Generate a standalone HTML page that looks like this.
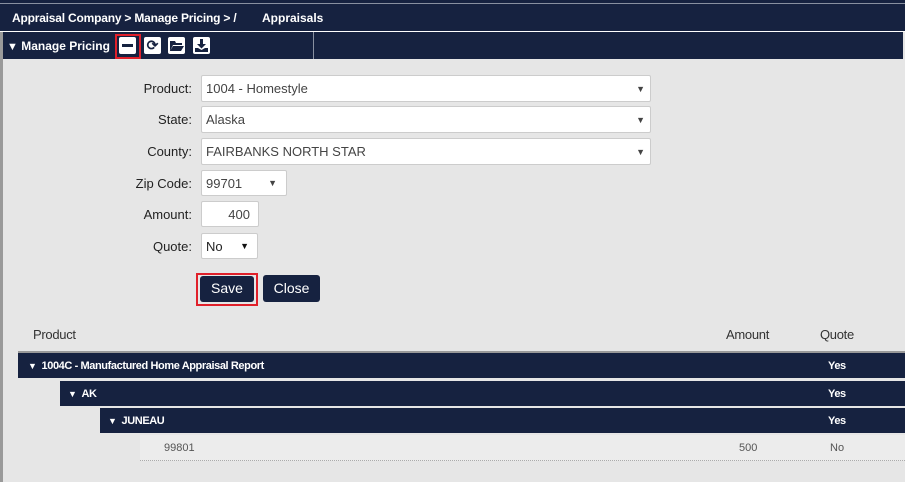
<!DOCTYPE html>
<html><head><style>
*{margin:0;padding:0;box-sizing:border-box}
body{width:905px;height:482px;background:#e6e6e6;font-family:"Liberation Sans",sans-serif;position:relative;overflow:hidden}
.a{position:absolute}
.dk{background:#162240}
.t{color:#fff;font-weight:bold;font-size:12px}
.lbl{position:absolute;right:713px;font-size:13px;color:#222;text-align:right}
.sel{position:absolute;background:#fff;border:1px solid #ccc;border-radius:2px;font-size:13px;color:#444;padding-left:4px;display:flex;align-items:center}
.sel .ar{position:absolute;right:5px;font-size:9px;color:#444}
.row{position:absolute;height:25px;background:#162240;color:#fff;font-weight:bold;font-size:11px;display:flex;align-items:center;letter-spacing:-0.4px}
.ic{position:absolute;top:37px;width:17px;height:17px;background:#fff;border-radius:2px}
</style></head><body>
<div class="a" style="left:0;top:0;width:3px;height:482px;background:#9a9a9a"></div>
<div class="a dk" style="left:0;top:0;width:905px;height:31px"></div>
<div class="a" style="left:0;top:3px;width:905px;height:1px;background:#8890a0"></div>
<div class="a" style="left:0;top:31px;width:905px;height:1px;background:#fff"></div>
<div class="a dk" style="left:3px;top:32px;width:900px;height:27px"></div>
<div class="a" style="left:313px;top:32px;width:1px;height:27px;background:#8890a0"></div>
<div class="a t" style="left:12px;top:11px;letter-spacing:-0.2px">Appraisal Company &gt; Manage Pricing &gt; /</div>
<div class="a t" style="left:262px;top:11px">Appraisals</div>
<div class="a t" style="left:7px;top:39px"><span style="font-size:11px">▼</span> Manage Pricing</div>
<div class="a" style="left:115px;top:34px;width:26px;height:25px;border:2px solid #e0202a"></div>
<div class="ic" style="left:119px"><div class="a" style="left:3px;top:7px;width:11px;height:3px;background:#162240"></div></div>
<div class="ic" style="left:144px;color:#162240;font-size:14px;font-weight:bold;text-align:center;line-height:17px">⟳</div>
<div class="ic" style="left:168px"><svg width="17" height="17"><path d="M2 4h5l1 2h6v2H5l-3 6z M5 9h11l-3 5H2z" fill="#162240"/></svg></div>
<div class="ic" style="left:193px"><svg width="17" height="17"><path d="M7 2h3v5h3l-4.5 4.5L4 7h3z M2 11h3l3.5 2 3.5-2h3v4H2z" fill="#162240"/></svg></div>

<div class="lbl" style="top:81px">Product:</div>
<div class="sel" style="left:201px;top:75px;width:450px;height:27px">1004 - Homestyle<span class="ar">▼</span></div>
<div class="lbl" style="top:112px">State:</div>
<div class="sel" style="left:201px;top:106px;width:450px;height:27px">Alaska<span class="ar">▼</span></div>
<div class="lbl" style="top:144px">County:</div>
<div class="sel" style="left:201px;top:138px;width:450px;height:27px">FAIRBANKS NORTH STAR<span class="ar">▼</span></div>
<div class="lbl" style="top:176px">Zip Code:</div>
<div class="sel" style="left:201px;top:170px;width:86px;height:26px">99701<span class="ar" style="right:9px">▼</span></div>
<div class="lbl" style="top:207px">Amount:</div>
<div class="sel" style="left:201px;top:201px;width:58px;height:26px;justify-content:flex-end;padding-right:8px">400</div>
<div class="lbl" style="top:239px">Quote:</div>
<div class="sel" style="left:201px;top:233px;width:57px;height:26px;color:#222">No<span class="ar" style="right:8px;color:#111">▼</span></div>

<div class="a" style="left:196px;top:273px;width:62px;height:33px;border:2px solid #e0202a"></div>
<div class="a dk" style="left:200px;top:276px;width:54px;height:26px;border-radius:3px;color:#fff;font-size:14px;text-align:center;line-height:25px">Save</div>
<div class="a dk" style="left:263px;top:275px;width:57px;height:27px;border-radius:3px;color:#fff;font-size:14px;text-align:center;line-height:26px">Close</div>

<div class="a" style="left:33px;top:327px;font-size:13px;color:#333;letter-spacing:-0.3px">Product</div>
<div class="a" style="left:726px;top:327px;font-size:13px;color:#333;letter-spacing:-0.3px">Amount</div>
<div class="a" style="left:820px;top:327px;font-size:13px;color:#333;letter-spacing:-0.3px">Quote</div>
<div class="a" style="left:18px;top:351px;width:887px;height:2px;background:#999"></div>
<div class="row" style="left:18px;top:353px;width:887px;padding-left:10px"><span style="font-size:9px;margin-right:5px">▼</span>1004C - Manufactured Home Appraisal Report<span class="a" style="left:810px">Yes</span></div>
<div class="row" style="left:60px;top:381px;width:845px;padding-left:8px"><span style="font-size:9px;margin-right:5px">▼</span>AK<span class="a" style="left:768px">Yes</span></div>
<div class="row" style="left:100px;top:408px;width:805px;padding-left:8px"><span style="font-size:9px;margin-right:5px">▼</span>JUNEAU<span class="a" style="left:728px">Yes</span></div>
<div class="a" style="left:140px;top:435px;width:765px;height:26px;background:#ececec;border-bottom:1px dotted #aaa;font-size:11px;color:#555">
<span class="a" style="left:24px;top:7px">99801</span><span class="a" style="left:599px;top:7px">500</span><span class="a" style="left:690px;top:7px">No</span></div>
</body></html>
